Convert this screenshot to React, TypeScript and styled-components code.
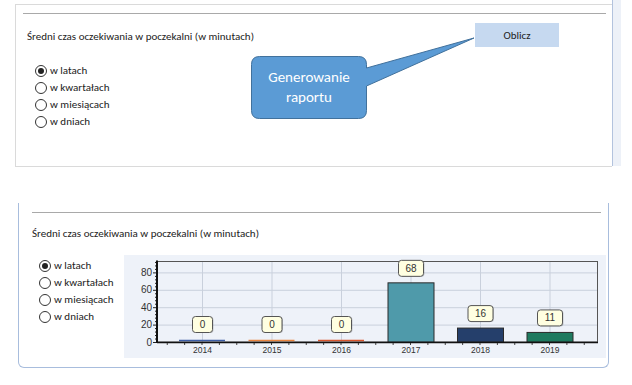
import styled, { createGlobalStyle } from 'styled-components';

const GlobalStyle = createGlobalStyle`
  body {
    margin: 0;
    background: #fff;
    font-family: Carlito, Lato, "Open Sans", sans-serif;
    color: #222;
  }
`;

const Page = styled.div`
  width: 632px;
  height: 385px;
  overflow: hidden;
`;

const TopArea = styled.div`
  display: flex;
  height: 167px;
  padding-left: 15px;
`;

const Panel = styled.div`
  position: relative;
  width: 596px;
  height: 161px;
  margin-top: 4px;
  border: 1px solid #dadada;
  border-right: none;
`;

const ScrollStripe = styled.div`
  width: 8px;
  height: 166px;
  background: #edf1f8;
  border-left: 1px solid #b3c3de;
`;

const Rule = styled.div<{ $left: number; $right: number; $top: number }>`
  margin: ${p => `${p.$top}px ${p.$right}px 0 ${p.$left}px`};
  border-top: 1px solid #a9a9a9;
`;

const HeaderRow = styled.div`
  display: flex;
  align-items: center;
  justify-content: space-between;
  margin-top: 9px;
  padding: 0 53px 0 11px;
`;

const Title = styled.div<{ $left?: number; $top?: number }>`
  font-size: 11px;
  padding-top: 3px;
  margin-left: ${p => p.$left ?? 0}px;
  margin-top: ${p => p.$top ?? 0}px;
`;

const CalcButton = styled.button`
  width: 84px;
  height: 24px;
  border: none;
  background: #c6d9f0;
  font-family: inherit;
  font-size: 11px;
  color: #222;
  padding: 0;
`;

const RadioList = styled.div<{ $left: number; $top: number }>`
  display: flex;
  flex-direction: column;
  padding-left: ${p => p.$left}px;
  margin-top: ${p => p.$top}px;
`;

const RadioRow = styled.label`
  display: flex;
  align-items: center;
  gap: 3px;
  height: 17px;
  font-size: 11px;
`;

const RadioDot = styled.span<{ $checked?: boolean }>`
  display: inline-flex;
  align-items: center;
  justify-content: center;
  box-sizing: border-box;
  width: 12px;
  height: 12px;
  border-radius: 50%;
  border: 1px solid #333;
  background: #fff;

  &::after {
    content: '';
    width: 6px;
    height: 6px;
    border-radius: 50%;
    background: ${p => (p.$checked ? '#222' : 'transparent')};
  }
`;

const Callout = styled.div`
  position: absolute;
  left: 235px;
  top: 27px;
  width: 230px;
  height: 92px;
`;

const CalloutText = styled.div`
  position: absolute;
  left: 0;
  top: 24px;
  width: 116px;
  height: 62px;
  display: flex;
  align-items: center;
  justify-content: center;
  text-align: center;
  color: #fff;
  font-size: 15px;
  line-height: 20px;
`;

const BottomPanel = styled.div`
  display: flow-root;
  width: 589px;
  height: 164px;
  margin: 36px 0 0 18px;
  border: 1px solid #a8bddd;
  border-top: none;
  border-radius: 0 0 6px 6px;
`;

const Body = styled.div`
  display: flex;
  margin-top: 15px;
`;

const ChartWrap = styled.div`
  margin-left: auto;
  margin-right: 2px;
`;

const ChartBox = styled.div`
  width: 482px;
  height: 103px;
  background: #eef2f9;
`;

const options = ['w latach', 'w kwartałach', 'w miesiącach', 'w dniach'];

const Radios = ({ left, top }: { left: number; top: number }) => (
  <RadioList $left={left} $top={top}>
    {options.map((o, i) => (
      <RadioRow key={o}>
        <RadioDot $checked={i === 0} />
        {o}
      </RadioRow>
    ))}
  </RadioList>
);

const data = [
  { year: '2014', value: 0, color: '#3d5ea6' },
  { year: '2015', value: 0, color: '#e9843f' },
  { year: '2016', value: 0, color: '#d9562e' },
  { year: '2017', value: 68, color: '#4f9aaa' },
  { year: '2018', value: 16, color: '#253f6b' },
  { year: '2019', value: 11, color: '#1e7a5f' },
];

// plot frame inside the chart box
const L = 33;
const T = 6.5;
const R = 473;
const B = 87;
const K = 0.87;
const cx = (i: number) => 78 + i * 69.5;
const yv = (v: number) => B - v * K;

const Chart = () => {
  const minor = Array.from({ length: 24 }, (_, i) => i * 4);
  const xticks = Array.from({ length: 25 }, (_, j) => 43.25 + j * 17.375);
  return (
    <svg width={482} height={103} fontFamily="'Liberation Sans', Arial, sans-serif">
      {[20, 40, 60, 80].map(v => (
        <line key={v} x1={L} x2={R} y1={yv(v) + 0.5} y2={yv(v) + 0.5} stroke="#c9d0dc" />
      ))}
      {data.map((d, i) => (
        <line key={d.year} x1={cx(i) + 0.5} x2={cx(i) + 0.5} y1={T} y2={B} stroke="#c9d0dc" />
      ))}
      <rect x={L + 0.5} y={T} width={R - L} height={B - T} fill="none" stroke="#555" />
      {minor.map(v => (
        <line key={v} x1={v % 20 === 0 ? L - 4 : L - 2} x2={L} y1={yv(v) + 0.5} y2={yv(v) + 0.5} stroke="#222" />
      ))}
      {xticks.map(x => (
        <line key={x} x1={x} x2={x} y1={B} y2={B + 3} stroke="#444" />
      ))}
      {[0, 20, 40, 60, 80].map(v => (
        <text key={v} x={L - 5} y={yv(v) + 3.5} textAnchor="end" fontSize={10} fill="#333">
          {v}
        </text>
      ))}
      {data.map((d, i) =>
        d.value > 0 ? (
          <rect
            key={d.year}
            x={cx(i) - 22.5}
            y={yv(d.value)}
            width={46}
            height={d.value * K}
            fill={d.color}
            stroke="#2a2a2a"
          />
        ) : (
          <line key={d.year} x1={cx(i) - 23} x2={cx(i) + 23} y1={B - 1.5} y2={B - 1.5} stroke={d.color} strokeWidth={1.5} />
        )
      )}
      <line x1={L} x2={L} y1={T - 1} y2={B + 1} stroke="#111" strokeWidth={2} />
      <line x1={L} x2={R + 1} y1={B + 0.5} y2={B + 0.5} stroke="#111" strokeWidth={1.5} />
      {data.map((d, i) => {
        const w = d.value > 9 ? 25 : 20;
        const cy = d.value > 0 ? yv(d.value) - 15 : B - 18;
        return (
          <g key={d.year}>
            <rect x={cx(i) - w / 2 + 1.5} y={cy - 7} width={w} height={16} rx={3} fill="rgba(0,0,0,0.18)" />
            <rect x={cx(i) - w / 2 + 0.5} y={cy - 7.5} width={w} height={16} rx={3} fill="#ffffe1" stroke="#555" />
            <text x={cx(i) + 0.5} y={cy + 4} textAnchor="middle" fontSize={10} fill="#333">
              {d.value}
            </text>
          </g>
        );
      })}
      {data.map((d, i) => (
        <text key={d.year} x={cx(i) + 0.5} y={98} textAnchor="middle" fontSize={8.5} fill="#333">
          {d.year}
        </text>
      ))}
    </svg>
  );
};

export default function App() {
  return (
    <Page>
      <GlobalStyle />
      <TopArea>
        <Panel>
          <Rule $top={8} $left={7} $right={6} />
          <HeaderRow>
            <Title>Średni czas oczekiwania w poczekalni (w minutach)</Title>
            <CalcButton>Oblicz</CalcButton>
          </HeaderRow>
          <Radios left={19} top={15} />
          <Callout>
            <svg width={230} height={92}>
              <path
                d="M8.5,24.5 H107.5 Q115.5,24.5 115.5,32.5 V36 L223,6 L115.5,54 V78.5 Q115.5,86.5 107.5,86.5 H8.5 Q0.5,86.5 0.5,78.5 V32.5 Q0.5,24.5 8.5,24.5 Z"
                fill="#5b9bd5"
                stroke="#41719c"
              />
            </svg>
            <CalloutText>
              Generowanie
              <br />
              raportu
            </CalloutText>
          </Callout>
        </Panel>
        <ScrollStripe />
      </TopArea>
      <BottomPanel>
        <Rule $top={9} $left={13} $right={7} />
        <Title $left={13} $top={11}>
          Średni czas oczekiwania w poczekalni (w minutach)
        </Title>
        <Body>
          <Radios left={20} top={2} />
          <ChartWrap>
            <ChartBox>
              <Chart />
            </ChartBox>
          </ChartWrap>
        </Body>
      </BottomPanel>
    </Page>
  );
}
